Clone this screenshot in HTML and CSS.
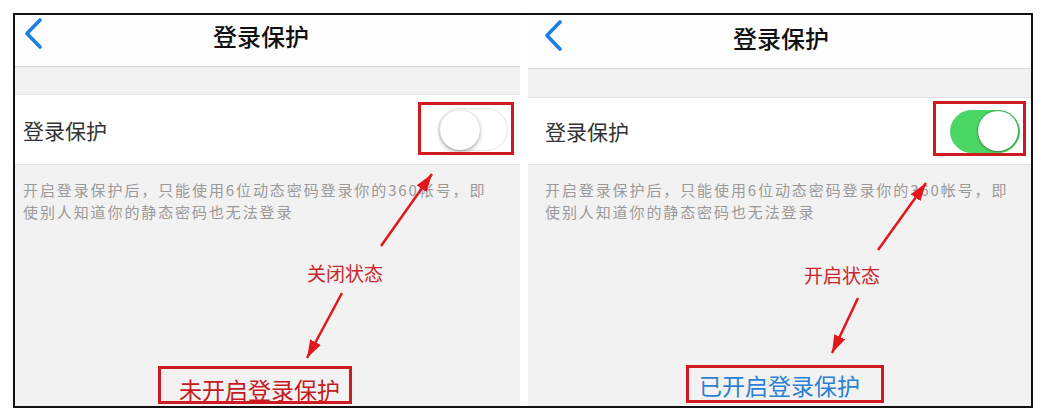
FILE: index.html
```html
<!DOCTYPE html>
<html lang="zh-CN">
<head>
    <meta charset="UTF-8">
    <title>登录保护</title>
    <link rel="stylesheet" href="styles.css">
</head>
<body>
    <div class="frame">
        <section class="panel panel-off">
            <header class="nav">
                <svg class="back" viewBox="0 0 20 32"><path d="M17 2 L4 15.5 L17 29"/></svg>
                <h1 class="nav-title">登录保护</h1>
                <span></span>
            </header>
            <div class="spacer"></div>
            <div class="setting-row">
                <span class="setting-label">登录保护</span>
                <span class="switch"><span class="knob"></span></span>
            </div>
            <div class="setting-note">
                <span class="note-line">开启登录保护后，只能使用6位动态密码登录你的360帐号，即</span>
                <span class="note-line">使别人知道你的静态密码也无法登录</span>
            </div>
        </section>
        <section class="panel panel-on">
            <header class="nav">
                <svg class="back" viewBox="0 0 20 32"><path d="M17 2 L4 15.5 L17 29"/></svg>
                <h1 class="nav-title">登录保护</h1>
                <span></span>
            </header>
            <div class="spacer"></div>
            <div class="setting-row">
                <span class="setting-label">登录保护</span>
                <span class="switch switch-on"><span class="knob"></span></span>
            </div>
            <div class="setting-note">
                <span class="note-line">开启登录保护后，只能使用6位动态密码登录你的360帐号，即</span>
                <span class="note-line">使别人知道你的静态密码也无法登录</span>
            </div>
        </section>
    </div>

    <!-- annotations drawn over the screenshots -->
    <div class="notes">
        <svg class="arrows" width="1045" height="420" viewBox="0 0 1045 420">
            <defs>
                <marker id="head" markerWidth="18" markerHeight="12" refX="18" refY="6" orient="auto" markerUnits="userSpaceOnUse">
                    <path d="M0 0 L18 6 L0 12 Z" fill="#e3161b"/>
                </marker>
            </defs>
            <line x1="381" y1="246" x2="432" y2="174" marker-end="url(#head)"/>
            <line x1="342" y1="293" x2="307" y2="358" marker-end="url(#head)"/>
            <line x1="878" y1="250" x2="926" y2="183" marker-end="url(#head)"/>
            <line x1="858" y1="298" x2="832" y2="353" marker-end="url(#head)"/>
        </svg>
        <div class="mark mark-off"></div>
        <div class="mark mark-on"></div>
        <span class="state-label label-off">关闭状态</span>
        <span class="state-label label-on">开启状态</span>
        <div class="result result-off">未开启登录保护</div>
        <div class="result result-on">已开启登录保护</div>
    </div>
</body>
</html>
```

FILE: styles.css
```css
* {
    box-sizing: border-box;
}
body {
    margin: 0;
    width: 1045px;
    height: 420px;
    overflow: hidden;
    position: relative;
    background: #fff;
    font-family: "Noto Sans CJK SC", "Noto Sans", sans-serif;
}
.frame {
    margin: 13px 0 0 13px;
    width: 1020px;
    height: 395px;
    border: 2px solid #111;
    display: grid;
    grid-template-columns: 505px 503px;
    column-gap: 8px;
    background: #fff;
}
.panel {
    background: #f3f2f2;
    display: flex;
    flex-direction: column;
    overflow: hidden;
}
.nav {
    display: grid;
    grid-template-columns: 1fr auto 1fr;
    align-items: start;
    background: #fdfdfd;
    border-bottom: 1px solid #d6d6d6;
}
.panel-off .nav {
    height: 52px;
    padding: 5px 21px 0 8px;
}
.panel-on .nav {
    height: 54px;
    padding: 7px 12px 0 15px;
}
.back {
    width: 20px;
    height: 32px;
    margin-top: -2px;
}
.back path {
    fill: none;
    stroke: #1b7fe3;
    stroke-width: 3.6;
    stroke-linecap: round;
    stroke-linejoin: round;
}
.nav-title {
    margin: 0;
    font-size: 24px;
    line-height: 32px;
    font-weight: 500;
    color: #111;
}
.panel-off .spacer {
    height: 27px;
}
.panel-on .spacer {
    height: 28px;
}
.setting-row {
    background: #fff;
    border-top: 1px solid #e2e2e2;
    border-bottom: 1px solid #e2e2e2;
    display: flex;
    align-items: center;
    justify-content: space-between;
}
.panel-off .setting-row {
    height: 71px;
    padding: 0 12px 0 8px;
}
.panel-on .setting-row {
    height: 68px;
    padding: 0 11px 0 17px;
}
.setting-label {
    font-size: 21px;
    color: #333;
}
.switch {
    width: 70px;
    height: 43px;
    border-radius: 22px;
    border: 1.5px solid #e6e6e6;
    background: #fff;
    display: flex;
    align-items: center;
    padding: 0 1px;
}
.knob {
    width: 40px;
    height: 40px;
    border-radius: 50%;
    background: #fff;
    box-shadow: 0 2px 4px rgba(0,0,0,0.3), 0 0 1px rgba(0,0,0,0.25);
}
.switch-on {
    background: #4bd763;
    border-color: #4bd763;
    justify-content: flex-end;
}
.switch-on .knob {
    box-shadow: 0 1px 3px rgba(0,0,0,0.3), 0 0 0 1px rgba(60,150,70,0.4);
}
.setting-note {
    padding-top: 14px;
    font-size: 15px;
    letter-spacing: 1.9px;
    color: #999;
    white-space: nowrap;
}
.note-line {
    display: block;
    height: 22px;
    line-height: 22px;
}
.panel-off .setting-note {
    padding-left: 8px;
}
.panel-on .setting-note {
    padding-left: 17px;
}
.notes {
    position: absolute;
    inset: 0;
    pointer-events: none;
}
.arrows {
    position: absolute;
    left: 0;
    top: 0;
}
.arrows line {
    stroke: #e3161b;
    stroke-width: 2.5;
}
.mark {
    position: absolute;
    border: 3px solid #cf1b1f;
}
.mark-off {
    left: 418px;
    top: 102px;
    width: 96px;
    height: 53px;
}
.mark-on {
    left: 933px;
    top: 101px;
    width: 93px;
    height: 55px;
}
.state-label {
    position: absolute;
    font-size: 19px;
    line-height: 24px;
    color: #c9262c;
}
.label-off {
    left: 307px;
    top: 261px;
}
.label-on {
    left: 804px;
    top: 263px;
}
.result {
    position: absolute;
    height: 38px;
    border: 3px solid #cf1b1f;
    font-size: 23px;
    line-height: 30px;
    white-space: nowrap;
}
.result-off {
    left: 158px;
    top: 366px;
    width: 194px;
    padding: 5px 0 0 18px;
    color: #c41a1e;
}
.result-on {
    left: 686px;
    top: 365px;
    width: 198px;
    padding: 2px 0 0 10px;
    color: #2b7fd4;
}
```
